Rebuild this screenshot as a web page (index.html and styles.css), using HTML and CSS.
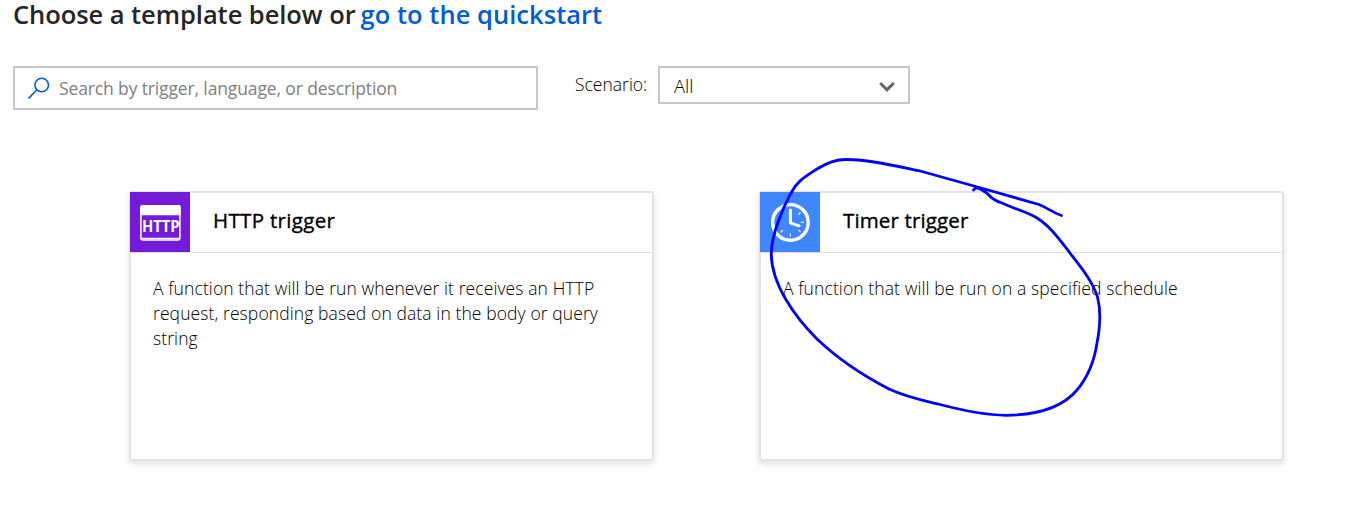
FILE: index.html
```html
<!DOCTYPE html>
<html lang="en">
<head>
<meta charset="utf-8">
<title>Choose a template</title>
<link rel="stylesheet" href="styles.css">
</head>
<body>
<main class="page">
  <h1 class="heading"><span class="heading-text">Choose a template below or</span><a class="heading-link">go to the quickstart</a></h1>
  <div class="filters">
    <div class="search">
      <svg class="search-icon" width="22" height="22" viewBox="0 0 22 22"><circle cx="13.7" cy="8" r="6.8"/><path d="M8.9 12.8 0.6 21.400"/></svg>
      <span class="placeholder">Search by trigger, language, or description</span>
    </div>
    <span class="label">Scenario:</span>
    <div class="select">
      <span class="select-value">All</span>
      <svg class="chevron" width="16" height="11" viewBox="0 0 16 11"><path d="M1.2 2 8 8.8 14.8 2"/></svg>
    </div>
  </div>
  <div class="cards">
    <section class="card">
      <header class="card-header">
        <svg class="card-icon" width="60" height="60" viewBox="0 0 60 60">
          <rect width="60" height="60" fill="#731bd9"/>
          <rect x="10.900" y="13.900" width="39" height="34" rx="2" fill="none" stroke="#fff" stroke-width="1.500"/>
          <path d="M10.200 23.300V15q0-2 2-2h36.500q2 0 2 2v8.300z" fill="#fff"/>
          <path d="M11 46.500h39" stroke="#fff" stroke-width="1.300"/>
          <text class="icon-text" x="12" y="39.800" textLength="37.500" lengthAdjust="spacingAndGlyphs">HTTP</text>
        </svg>
        <h2 class="card-title http-title">HTTP trigger</h2>
      </header>
      <p class="card-text">A function that will be run whenever it receives an HTTP<br>request, responding based on data in the body or query<br>string</p>
    </section>
    <section class="card">
      <header class="card-header">
        <svg class="card-icon" width="60" height="60" viewBox="0 0 60 60">
          <rect width="60" height="60" fill="#3e87ff"/>
          <circle cx="30.400" cy="30.400" r="17.800" fill="none" stroke="#fff" stroke-width="3.400"/>
          <path d="M30.400 18v12.800l8.700 3" fill="none" stroke="#fff" stroke-width="3" stroke-linecap="round" stroke-linejoin="round"/>
          <path d="M41 30.400h3M38.500 22.500l2-2M38.500 38l2 2M30.400 41.500v3M20.500 40.300l2.500-2.300" stroke="#fff" stroke-width="1.100"/>
        </svg>
        <h2 class="card-title timer-title">Timer trigger</h2>
      </header>
      <p class="card-text">A function that will be run on a specified schedule</p>
    </section>
  </div>
  <svg class="annotation" width="1348" height="516" viewBox="0 0 1348 516">
    <path d="M973.500 190C976 186 980 189 986 192.500C991 196 990 199 1002 203C1014 209 1026 211 1037 218C1050 226 1060 240 1070 253C1080 266 1092 280 1097.500 297C1101 311 1100 328 1097 343C1094 363 1088 377 1077 390C1062 408 1035 415 1006 415.300C984 415 961 410 940 404.500C921 400 906 397 889 389C860 374 838 359 817 339C795 317 772 285 771.300 255C771 234 784 206 791 193C797 181 805 177 817 169C828 162 837 159.500 846 159.500C869 159 900 167 922 171.500C945 178 963 183 981 188L1039 204.500C1048 208 1052 212.500 1061.500 215.500"/>
  </svg>
</main>
</body>
</html>
```
FILE: styles.css
```css
* { box-sizing: border-box; }
body { margin: 0; background: #fff; font-family: "Open Sans", "Noto Sans", sans-serif; }
.page { position: relative; width: 1348px; height: 516px; }
.heading { display: flex; gap: 5px; height: 66px; margin: 0; padding-left: 13px; font-size: 25.5px; line-height: 29px; font-weight: 600; color: #252525; white-space: nowrap; }
.heading-text { letter-spacing: -.06px; }
.heading-link { color: #015cda; letter-spacing: .03px; }
.filters { display: flex; align-items: flex-start; height: 125px; padding-left: 13px; font-size: 17.5px; font-weight: 300; color: #000; white-space: nowrap; }
.search { display: flex; align-items: center; gap: 9px; width: 525px; height: 44px; padding-left: 13px; border: 2px solid #c8c8c8; color: #808080; }
.placeholder { font-weight: 400; letter-spacing: -.13px; }
.search-icon { fill: none; stroke: #015cda; stroke-width: 1.6; }
.label { width: 73px; margin: 5px 10px 0 37px; line-height: 26px; }
.select { display: flex; align-items: center; justify-content: space-between; width: 252px; height: 38px; padding: 2px 13px 0 14px; border: 2px solid #c8c8c8; }
.select-value { padding-bottom: 2px; font-size: 18.5px; }
.chevron { fill: none; stroke: #666; stroke-width: 3; }
.cards { display: flex; gap: 105px; padding-left: 129px; }
.card { width: 525px; height: 270px; border: 2px solid #e3e3e3; border-radius: 3px; box-shadow: 0 3px 6px rgba(0, 0, 0, .12); }
.card-header { display: flex; height: 60px; border-bottom: 1px solid #e0e0e0; }
.card-icon { flex: none; margin: -1px 0 0 -1px; }
.icon-text { font-size: 15.5px; font-weight: 700; fill: #fff; }
.card-title { margin: 0 0 0 23px; font-size: 20.5px; line-height: 54px; font-weight: 400; -webkit-text-stroke: .35px #000; color: #000; white-space: nowrap; }
.http-title { letter-spacing: .32px; }
.timer-title { letter-spacing: .14px; }
.card-text { margin: 0; padding: 23px 0 0 22px; font-size: 17.5px; line-height: 25px; font-weight: 300; letter-spacing: .1px; color: #000; white-space: nowrap; }
.annotation { position: absolute; inset: 0; fill: none; stroke: #00f; stroke-width: 2.8; stroke-linecap: round; stroke-linejoin: round; }
```
